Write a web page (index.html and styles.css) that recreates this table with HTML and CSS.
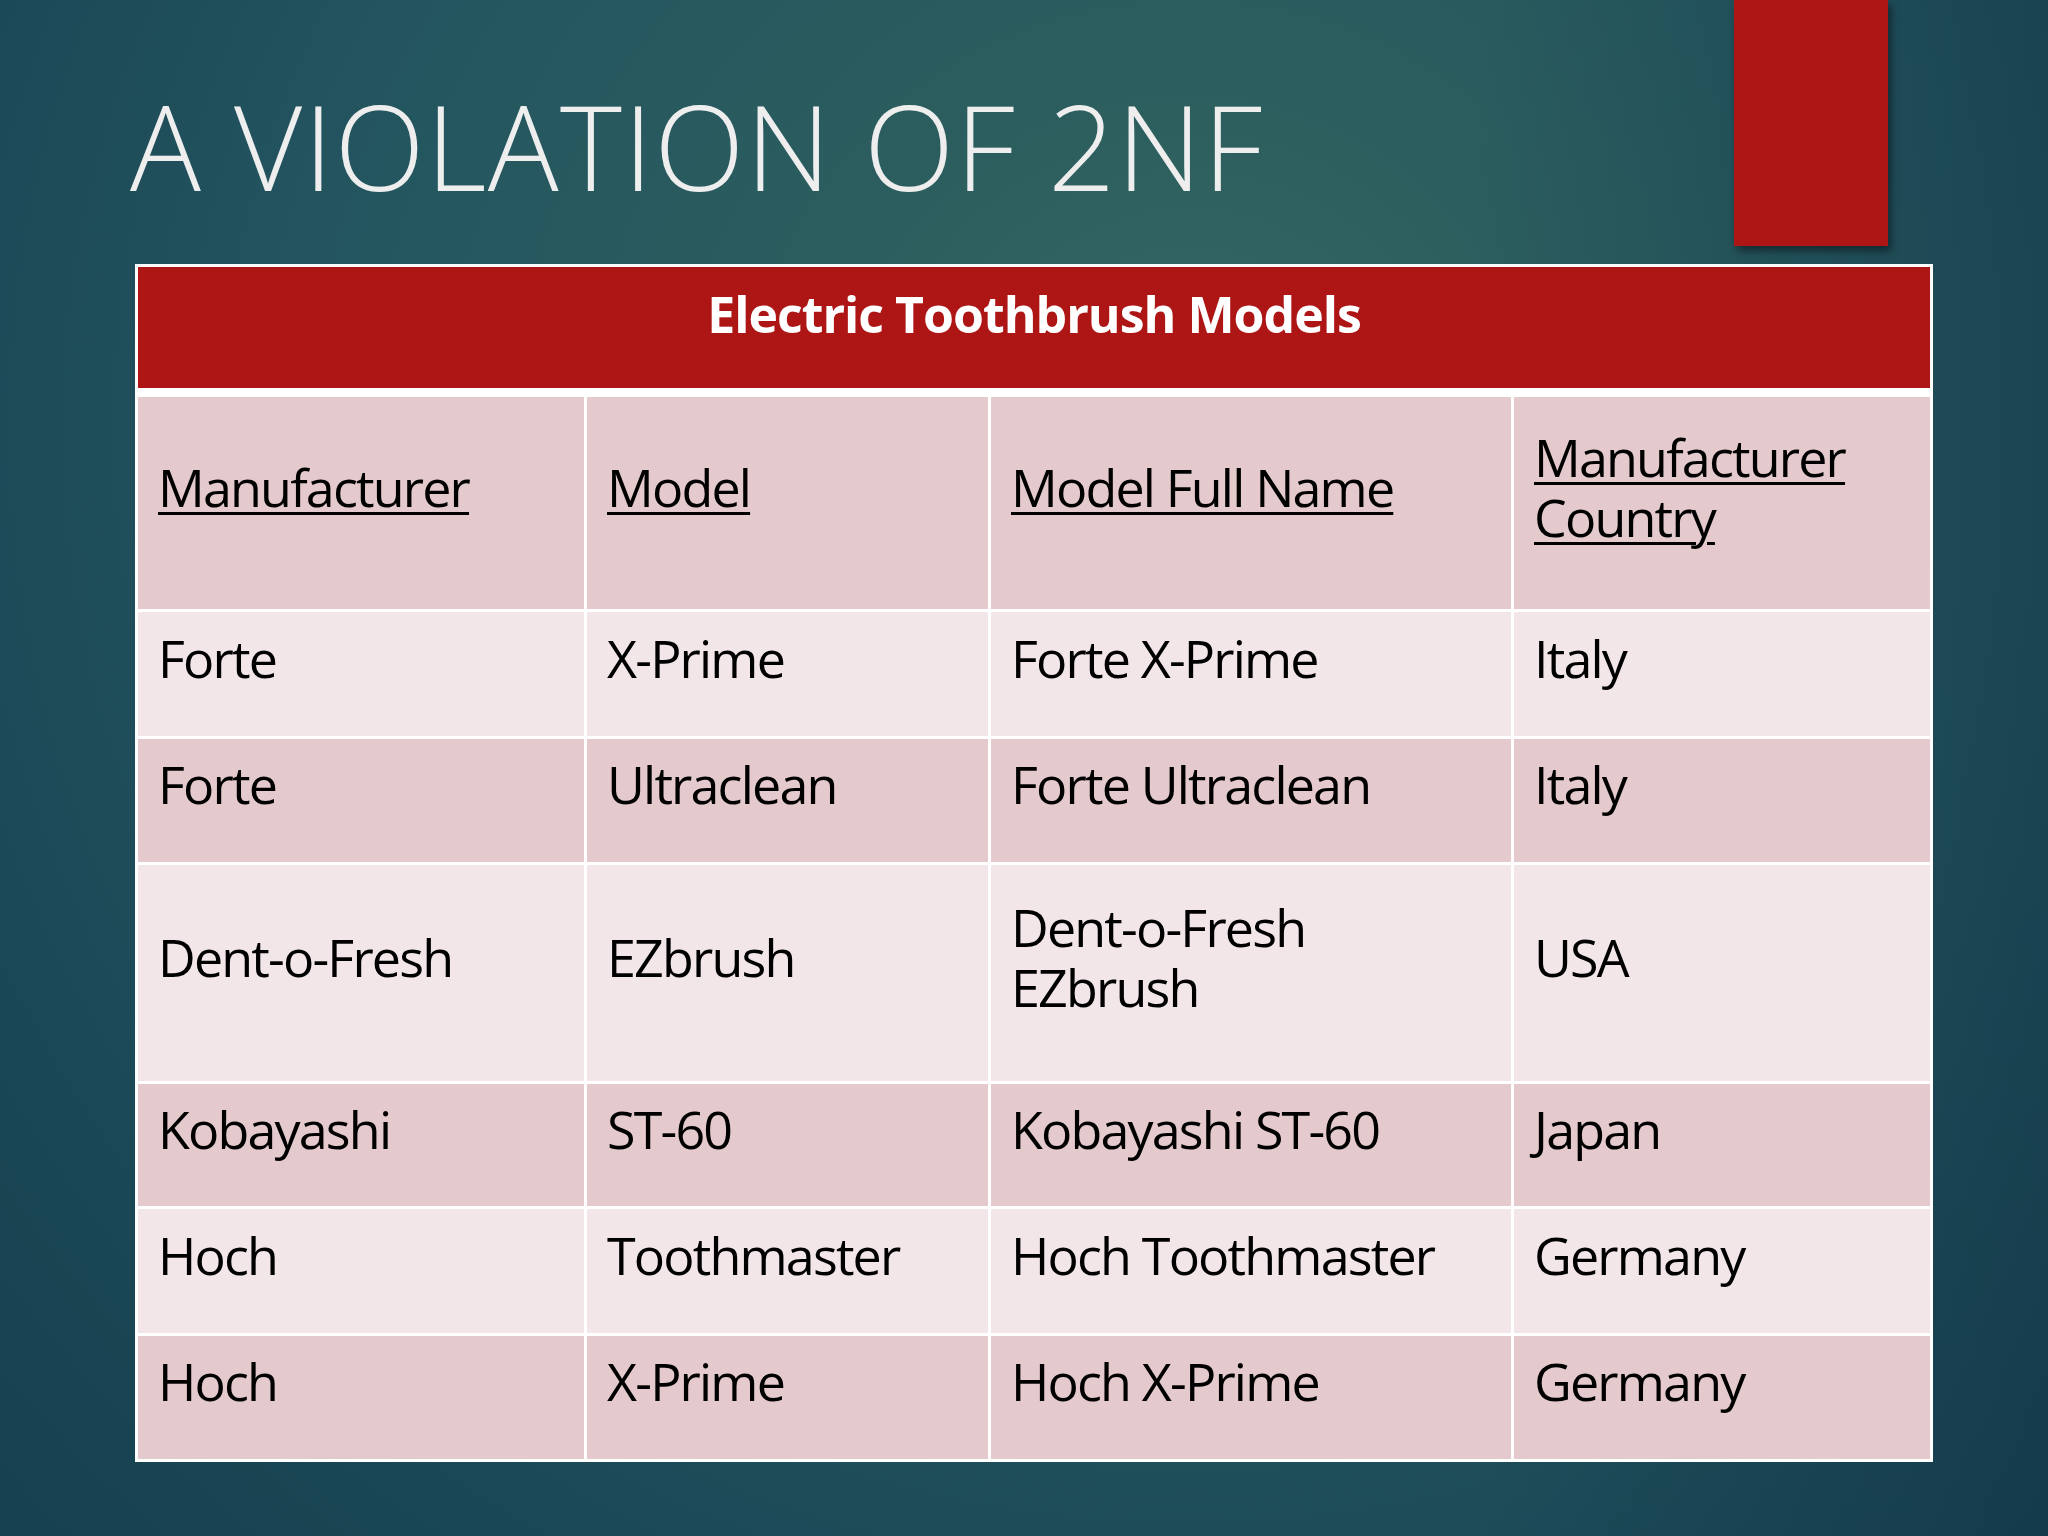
FILE: index.html
```html
<!DOCTYPE html>
<html lang="en">
<head>
<meta charset="utf-8">
<title>A Violation of 2NF</title>
<link rel="stylesheet" href="styles.css">
</head>
<body>
<div class="slide">
  <div class="accent"></div>
  <h1 class="title">A VIOLATION OF 2NF</h1>
  <div class="table">
    <div class="caption">Electric Toothbrush Models</div>

    <div class="cell head dark"><span class="u">Manufacturer</span></div>
    <div class="cell head dark"><span class="u">Model</span></div>
    <div class="cell head dark"><span class="u">Model Full Name</span></div>
    <div class="cell head dark"><span class="u">Manufacturer Country</span></div>

    <div class="cell light">Forte</div>
    <div class="cell light">X-Prime</div>
    <div class="cell light">Forte X-Prime</div>
    <div class="cell light">Italy</div>

    <div class="cell dark">Forte</div>
    <div class="cell dark">Ultraclean</div>
    <div class="cell dark">Forte Ultraclean</div>
    <div class="cell dark">Italy</div>

    <div class="cell light">Dent-o-Fresh</div>
    <div class="cell light">EZbrush</div>
    <div class="cell light narrow">Dent-o-Fresh EZbrush</div>
    <div class="cell light">USA</div>

    <div class="cell dark">Kobayashi</div>
    <div class="cell dark">ST-60</div>
    <div class="cell dark">Kobayashi ST-60</div>
    <div class="cell dark">Japan</div>

    <div class="cell light">Hoch</div>
    <div class="cell light">Toothmaster</div>
    <div class="cell light">Hoch Toothmaster</div>
    <div class="cell light">Germany</div>

    <div class="cell dark">Hoch</div>
    <div class="cell dark">X-Prime</div>
    <div class="cell dark">Hoch X-Prime</div>
    <div class="cell dark">Germany</div>
  </div>
</div>
</body>
</html>
```

FILE: styles.css
```css
html, body {
  margin: 0;
  padding: 0;
}

body {
  width: 2048px;
  height: 1536px;
  overflow: hidden;
  font-family: "Open Sans", "Noto Sans", "Liberation Sans", sans-serif;
}

.slide {
  position: relative;
  box-sizing: border-box;
  width: 2048px;
  height: 1536px;
  padding: 87px 0 0 135px;
  background:
    linear-gradient(90deg, rgba(10, 40, 60, 0) 0%, rgba(10, 40, 60, 0) 72%, rgba(10, 40, 60, 0.35) 100%),
    radial-gradient(ellipse 85% 110% at 58% 28%, #356862 0%, #2c5d5e 22%, #245660 48%, #1c4957 72%, #143e4d 100%);
}

.accent {
  position: absolute;
  left: 1734px;
  top: 0;
  width: 154px;
  height: 246px;
  background: #ae1515;
  box-shadow: 3px 5px 8px rgba(0, 0, 0, 0.45);
}

.title {
  margin: 0 0 59px -5px;
  font-family: "Open Sans", "Noto Sans", sans-serif;
  font-weight: 300;
  font-size: 118px;
  line-height: 118px;
  color: #eeeeee;
  white-space: nowrap;
  letter-spacing: 1.3px;
}

.table {
  display: grid;
  width: 1792px;
  grid-template-columns: 446px 401px 520px 416px;
  grid-template-rows: 127px 212px 124px 123px 216px 122px 124px 123px;
  gap: 3px;
  padding: 3px;
  background: #ffffff;
}

.caption {
  grid-column: 1 / -1;
  margin-bottom: 6px;
  display: flex;
  align-items: center;
  justify-content: center;
  box-sizing: border-box;
  padding-bottom: 28px;
  background: #ae1515;
  color: #ffffff;
  font-weight: 700;
  font-size: 50px;
  line-height: 60px;
  letter-spacing: -0.02em;
}

.cell {
  display: flex;
  align-items: center;
  box-sizing: border-box;
  padding: 0 10px 33px 20px;
  font-size: 52px;
  line-height: 60px;
  color: #000000;
  letter-spacing: -0.035em;
}

.narrow {
  padding-right: 120px;
}

.dark {
  background: #e4cacc;
}

.light {
  background: #f2e6e8;
}

.u {
  text-decoration: underline;
  text-decoration-thickness: 3px;
  text-underline-offset: 5px;
}
```
